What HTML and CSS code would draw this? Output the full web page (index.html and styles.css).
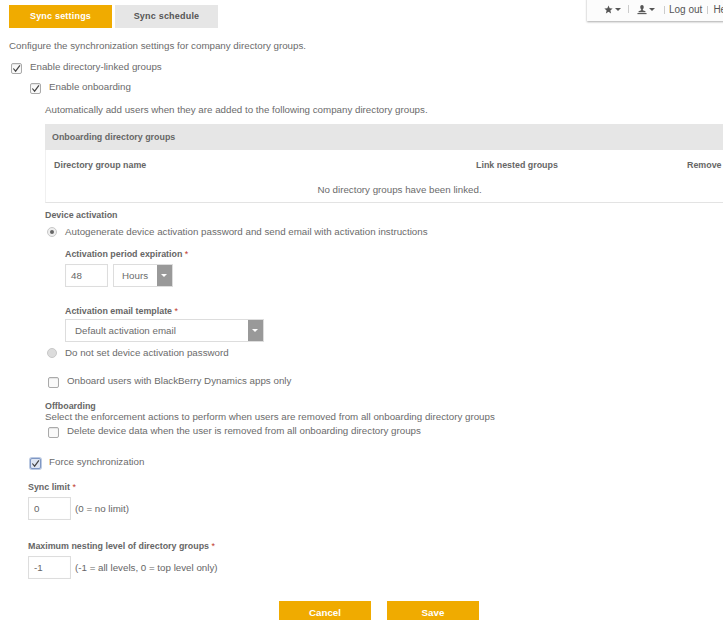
FILE: index.html
```html
<!DOCTYPE html>
<html lang="en">
<head>
<meta charset="utf-8">
<title>Sync settings</title>
<link rel="stylesheet" href="styles.css">
</head>
<body>
<div class="topmenu">
  <svg class="ic-star" width="9" height="9" viewBox="0 0 10 10"><path d="M5 .6 6.300 3.700 9.600 4 7.100 6.100 7.900 9.400 5 7.600 2.100 9.400 2.900 6.100 .4 4 3.700 3.700Z"/></svg>
  <span class="caret"></span>
  <span class="sep sep-a"></span>
  <svg class="ic-user" width="10" height="11" viewBox="0 0 11 11"><path d="M3.600 2.700C3.600 1.300 4.400.5 5.500.5S7.400 1.300 7.400 2.700C7.400 3.900 6.900 4.800 6.400 5.200V6.300L9.300 7.500V8.600H1.700V7.500L4.600 6.300V5.200C4.100 4.800 3.600 3.900 3.600 2.700Z"/><rect x=".5" y="9.400" width="10" height="1.200"/></svg>
  <span class="caret"></span>
  <span class="sep sep-b"></span>
  <span class="toplink">Log out</span>
  <span class="sep sep-c"></span>
  <span class="toplink">Help</span>
</div>
<main class="page">
  <nav class="tabs">
    <div class="tab tab-active">Sync settings</div>
    <div class="tab">Sync schedule</div>
  </nav>
  <p class="intro">Configure the synchronization settings for company directory groups.</p>
  <div class="check lvl0"><span class="box on"><svg width="9" height="9" viewBox="0 0 10 10"><path d="M1.500 5 4 8 8.800 1.500"/></svg></span><span>Enable directory-linked groups</span></div>
  <div class="check lvl1"><span class="box on"><svg width="9" height="9" viewBox="0 0 10 10"><path d="M1.500 5 4 8 8.800 1.500"/></svg></span><span>Enable onboarding</span></div>
  <section class="onboard">
    <p class="auto">Automatically add users when they are added to the following company directory groups.</p>
    <div class="panel">
      <div class="panel-head">Onboarding directory groups</div>
      <div class="cols"><span class="col-name">Directory group name</span><span class="col-link">Link nested groups</span><span class="col-rem">Remove</span></div>
      <div class="empty">No directory groups have been linked.</div>
    </div>
    <h3 class="lbl dev">Device activation</h3>
    <div class="radio r1"><span class="dot on"></span><span>Autogenerate device activation password and send email with activation instructions</span></div>
    <div class="sub">
      <div class="lbl period">Activation period expiration <i>*</i></div>
      <div class="fields">
        <div class="input in-48">48</div>
        <div class="select sel-h"><span>Hours</span><b></b></div>
      </div>
      <div class="lbl tmpl">Activation email template <i>*</i></div>
      <div class="select sel-t"><span>Default activation email</span><b></b></div>
    </div>
    <div class="radio r2"><span class="dot"></span><span>Do not set device activation password</span></div>
    <div class="check dyn"><span class="box"></span><span>Onboard users with BlackBerry Dynamics apps only</span></div>
    <h3 class="lbl off">Offboarding</h3>
    <p class="offtext">Select the enforcement actions to perform when users are removed from all onboarding directory groups</p>
    <div class="check del"><span class="box"></span><span>Delete device data when the user is removed from all onboarding directory groups</span></div>
  </section>
  <section class="bottom">
    <div class="check force"><span class="box on focus"><svg width="9" height="9" viewBox="0 0 10 10"><path d="M1.500 5 4 8 8.800 1.500"/></svg></span><span>Force synchronization</span></div>
    <div class="lbl limit">Sync limit <i>*</i></div>
    <div class="fields"><div class="input in-b">0</div><span class="hint">(0 = no limit)</span></div>
    <div class="lbl nest">Maximum nesting level of directory groups <i>*</i></div>
    <div class="fields"><div class="input in-b">-1</div><span class="hint">(-1 = all levels, 0 = top level only)</span></div>
  </section>
  <div class="actions">
    <button class="btn">Cancel</button>
    <button class="btn">Save</button>
  </div>
</main>
</body>
</html>
```
FILE: styles.css
```css
html, body { margin: 0; padding: 0; height: 620px; overflow: hidden; background: #fff; }
body { font-family: "Liberation Sans", Arial, sans-serif; font-size: 9.75px; line-height: 12px; color: #6b6b6b; position: relative; width: 723px; }
p, h3 { margin: 0; font: inherit; }
.page { padding-top: 5px; }

.topmenu { position: absolute; top: -2px; left: 587px; width: 150px; height: 23px; background: #fcfcfc; box-shadow: 0 1px 2px #aaa; display: flex; align-items: center; padding-left: 17px; box-sizing: border-box; color: #555; font-size: 10px; }
.topmenu svg { fill: #555; flex: none; }
.caret { width: 0; height: 0; border: 3px solid transparent; border-top: 3px solid #555; border-bottom: 0; margin-left: 2px; }
.sep { width: 1px; height: 8px; background: #ccc; }
.sep-a { margin: 0 8px 2px 7px; }
.sep-b { margin: 0 4px 0 9px; }
.sep-c { margin: 0 5px; }
.toplink { white-space: nowrap; }

.tabs { display: flex; gap: 3px; padding-left: 9px; }
.tab { width: 103px; height: 23px; background: #e6e6e6; font-weight: bold; font-size: 9px; letter-spacing: .2px; color: #555; line-height: 22px; text-align: center; box-sizing: border-box; }
.tab-active { background: #f0ab00; color: #fff; }
.intro { margin: 12px 0 0 9px; }

.check { display: flex; height: 12px; gap: 8px; }
.box { box-sizing: border-box; width: 11px; height: 11px; border: 1px solid #aaa; border-radius: 2px; background: #fafafa; flex: none; margin-top: 2px; position: relative; box-shadow: inset 0 1px 1px #e4e4e4; }
.box svg { position: absolute; left: 0; top: 0; fill: none; stroke: #444; stroke-width: 1.300; }
.box.focus { background: #dfe6f3; border-color: #7f97c4; box-shadow: 0 0 0 1px #bccae2; }
.lvl0 { margin: 9px 0 0 11px; }
.lvl1 { margin: 8px 0 0 30px; }

.onboard { padding-left: 45px; }
.auto { margin-top: 11px; }
.panel { margin-top: 8px; width: 700px; height: 79px; box-sizing: border-box; border-bottom: 1px solid #e3e3e3; border-left: 1px solid #f0f0f0; }
.panel-head { height: 26px; margin-left: -1px; background: #e6e6e6; font-weight: bold; font-size: 8.9px; line-height: 26px; padding-left: 7px; color: #666; }
.cols { height: 12px; margin-top: 9px; font-weight: bold; font-size: 8.9px; color: #666; display: flex; }
.col-name { margin-left: 8px; width: 422px; }
.col-link { width: 211px; }
.empty { margin-top: 13px; text-align: center; width: 707px; }

.lbl { font-weight: bold; font-size: 8.9px; color: #666; }
.lbl i { font-style: normal; color: #c0392b; font-weight: normal; }
.dev { margin-top: 6px; }
.radio { display: flex; gap: 8px; height: 12px; }
.dot { box-sizing: border-box; width: 10px; height: 10px; border-radius: 50%; background: #dcdcdc; border: 1px solid #c8c8c8; flex: none; position: relative; margin-top: 1px; }
.dot.on { background: #eee; }
.dot.on::after { content: ""; position: absolute; left: 2px; top: 2px; width: 4px; height: 4px; border-radius: 50%; background: #666; }
.r1 { margin-top: 5px; margin-left: 2px; }
.sub { padding-left: 20px; }
.period { margin-top: 10px; }
.fields { display: flex; align-items: center; gap: 5px; }
.sub .fields { margin-top: 4px; }
.input { box-sizing: border-box; width: 43px; height: 23px; border: 1px solid #ddd; line-height: 21px; padding-left: 5px; box-shadow: inset 0 0 1px #eee; color: #666; }
.select { box-sizing: border-box; height: 23px; border: 1px solid #ddd; display: flex; justify-content: space-between; line-height: 21px; }
.select b { width: 15px; background: #999; position: relative; flex: none; }
.select b::after { content: ""; position: absolute; left: 4px; top: 9px; border: 3px solid transparent; border-top: 3px solid #fff; border-bottom: 0; }
.sel-h { width: 60px; padding-left: 8px; }
.sel-t { width: 199px; padding-left: 9px; margin-top: 2px; }
.tmpl { margin-top: 18px; }
.r2 { margin-top: 5px; margin-left: 2px; }
.dyn { margin: 16px 0 0 3px; }
.off { margin-top: 13px; }
.offtext { margin-top: -1px; }
.del { margin: 2px 0 0 3px; }

.bottom { padding-left: 28px; }
.bottom .fields { margin-top: 4px; gap: 4px; }
.force { margin: 19px 0 0 2px; }
.limit { margin-top: 13px; }
.nest { margin-top: 20px; }
.hint { color: #666; }

.actions { display: flex; gap: 16px; padding-left: 279px; margin-top: 22px; }
.btn { width: 92px; height: 24px; background: #f0ab00; color: #fff; border: 0; font: bold 9.75px "Liberation Sans", Arial, sans-serif; padding: 0 0 2px; }
```
